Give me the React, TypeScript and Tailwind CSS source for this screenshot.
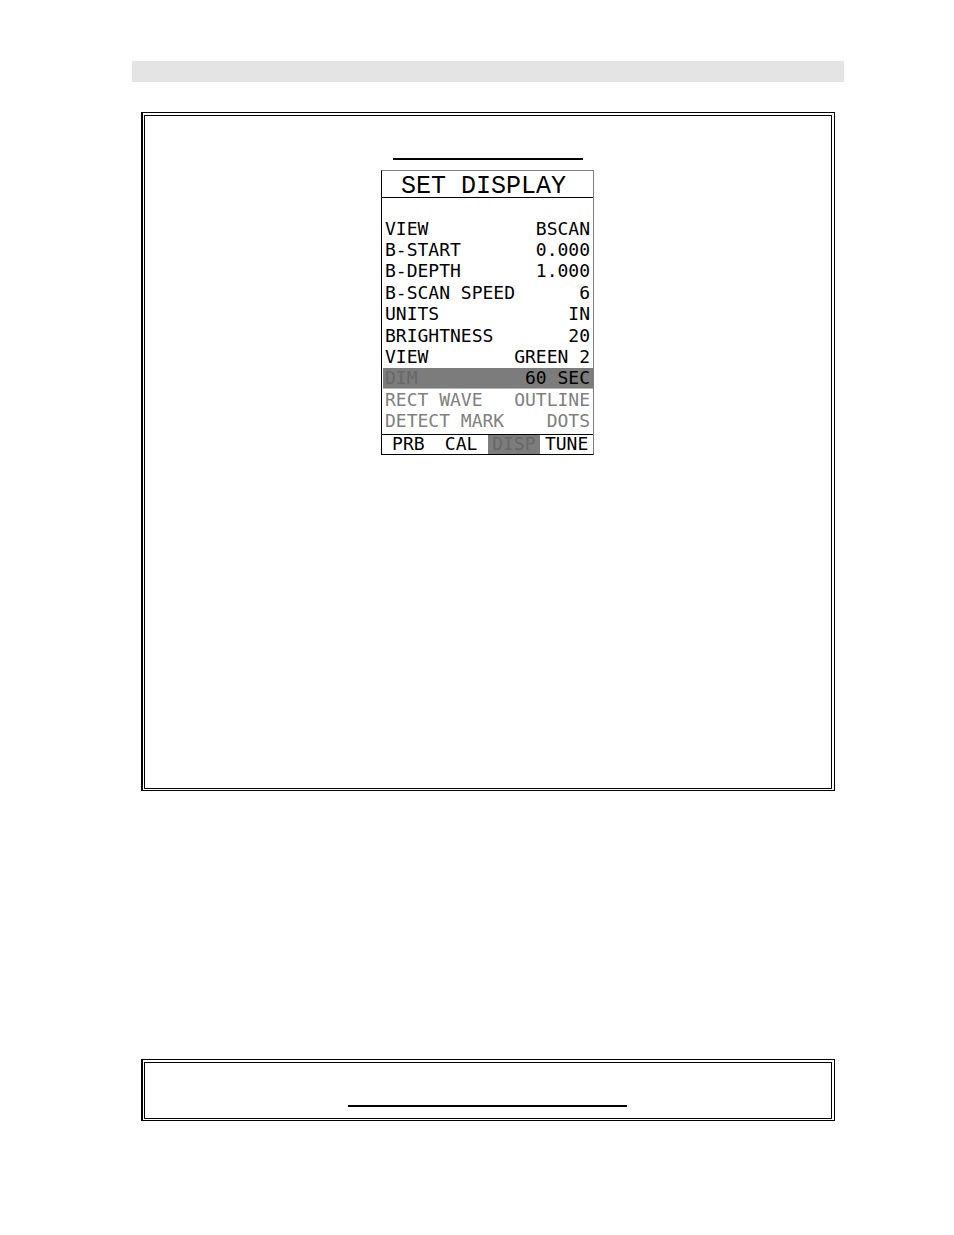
import type { ReactNode } from "react";

type RowState = "normal" | "selected" | "disabled";

interface Setting {
  label: string;
  value: string;
  state: RowState;
}

const SETTINGS: Setting[] = [
  { label: "VIEW", value: "BSCAN", state: "normal" },
  { label: "B-START", value: "0.000", state: "normal" },
  { label: "B-DEPTH", value: "1.000", state: "normal" },
  { label: "B-SCAN SPEED", value: "6", state: "normal" },
  { label: "UNITS", value: "IN", state: "normal" },
  { label: "BRIGHTNESS", value: "20", state: "normal" },
  { label: "VIEW", value: "GREEN 2", state: "normal" },
  { label: "DIM", value: "60 SEC", state: "selected" },
  { label: "RECT WAVE", value: "OUTLINE", state: "disabled" },
  { label: "DETECT MARK", value: "DOTS", state: "disabled" },
];

const TABS = ["PRB", "CAL", "DISP", "TUNE"];
const ACTIVE_TAB = "DISP";

const ROW_STYLE: Record<RowState, string> = {
  normal: "text-black",
  selected: "bg-[#7c7c7c] text-black border-b border-b-[#b4b4b4]",
  disabled: "text-[#808080]",
};

// Double ruled frame, slightly heavier on the left edge
function Frame({ children }: { children: ReactNode }) {
  return (
    <section className="mx-[9px] border border-l-2 border-black pt-[2px] pr-[2px] pb-px pl-px">
      <div className="border border-black">{children}</div>
    </section>
  );
}

function SettingRow({ label, value, state }: Setting) {
  return (
    <div className={`flex items-center justify-between pr-[3px] pl-[2px] ${ROW_STYLE[state]}`}>
      <dt className={state === "selected" ? "text-[#686868]" : ""}>{label}</dt>
      <dd>{value}</dd>
    </div>
  );
}

function DeviceScreen() {
  return (
    <div className="mx-auto w-[213px] border border-t-[#808080] border-r-[#808080] border-b-black border-l-black font-['DejaVu_Sans_Mono',monospace] text-[18px] leading-[20px] whitespace-pre">
      <h1 className="flex h-[27px] items-center border-b border-black pt-[5px] pl-[19px] font-['Liberation_Mono',monospace] text-[25px] leading-[24px]">
        SET DISPLAY
      </h1>
      <dl className="mt-5 grid h-[216px] grid-rows-10 pb-[2px] pl-px">
        {SETTINGS.map((s, i) => (
          <SettingRow key={i} {...s} />
        ))}
      </dl>
      <nav className="grid h-[20px] grid-cols-4 border-t border-black leading-[18px]">
        {TABS.map((tab) => (
          <button
            key={tab}
            type="button"
            className={`flex h-[19px] items-start justify-center ${
              tab === ACTIVE_TAB ? "bg-[#7c7c7c] text-[#686868]" : "text-black"
            }`}
          >
            {tab}
          </button>
        ))}
      </nav>
    </div>
  );
}

export default function App() {
  return (
    <main className="min-h-screen bg-white pt-[61px] pr-[110px] pb-6 pl-[132px]">
      <div className="h-[21px] bg-[#e4e4e4]" />

      <div className="mt-[30px]">
        <Frame>
          <div className="pt-[42px] pr-px pb-[333px]">
            <div className="mx-auto mb-[10px] h-[2px] w-[190px] bg-black" />
            <DeviceScreen />
          </div>
        </Frame>
      </div>

      <div className="mt-[268px]">
        <Frame>
          <div className="pt-[42px] pr-px pb-[11px]">
            <div className="mx-auto h-[2px] w-[279px] bg-black" />
          </div>
        </Frame>
      </div>
    </main>
  );
}
